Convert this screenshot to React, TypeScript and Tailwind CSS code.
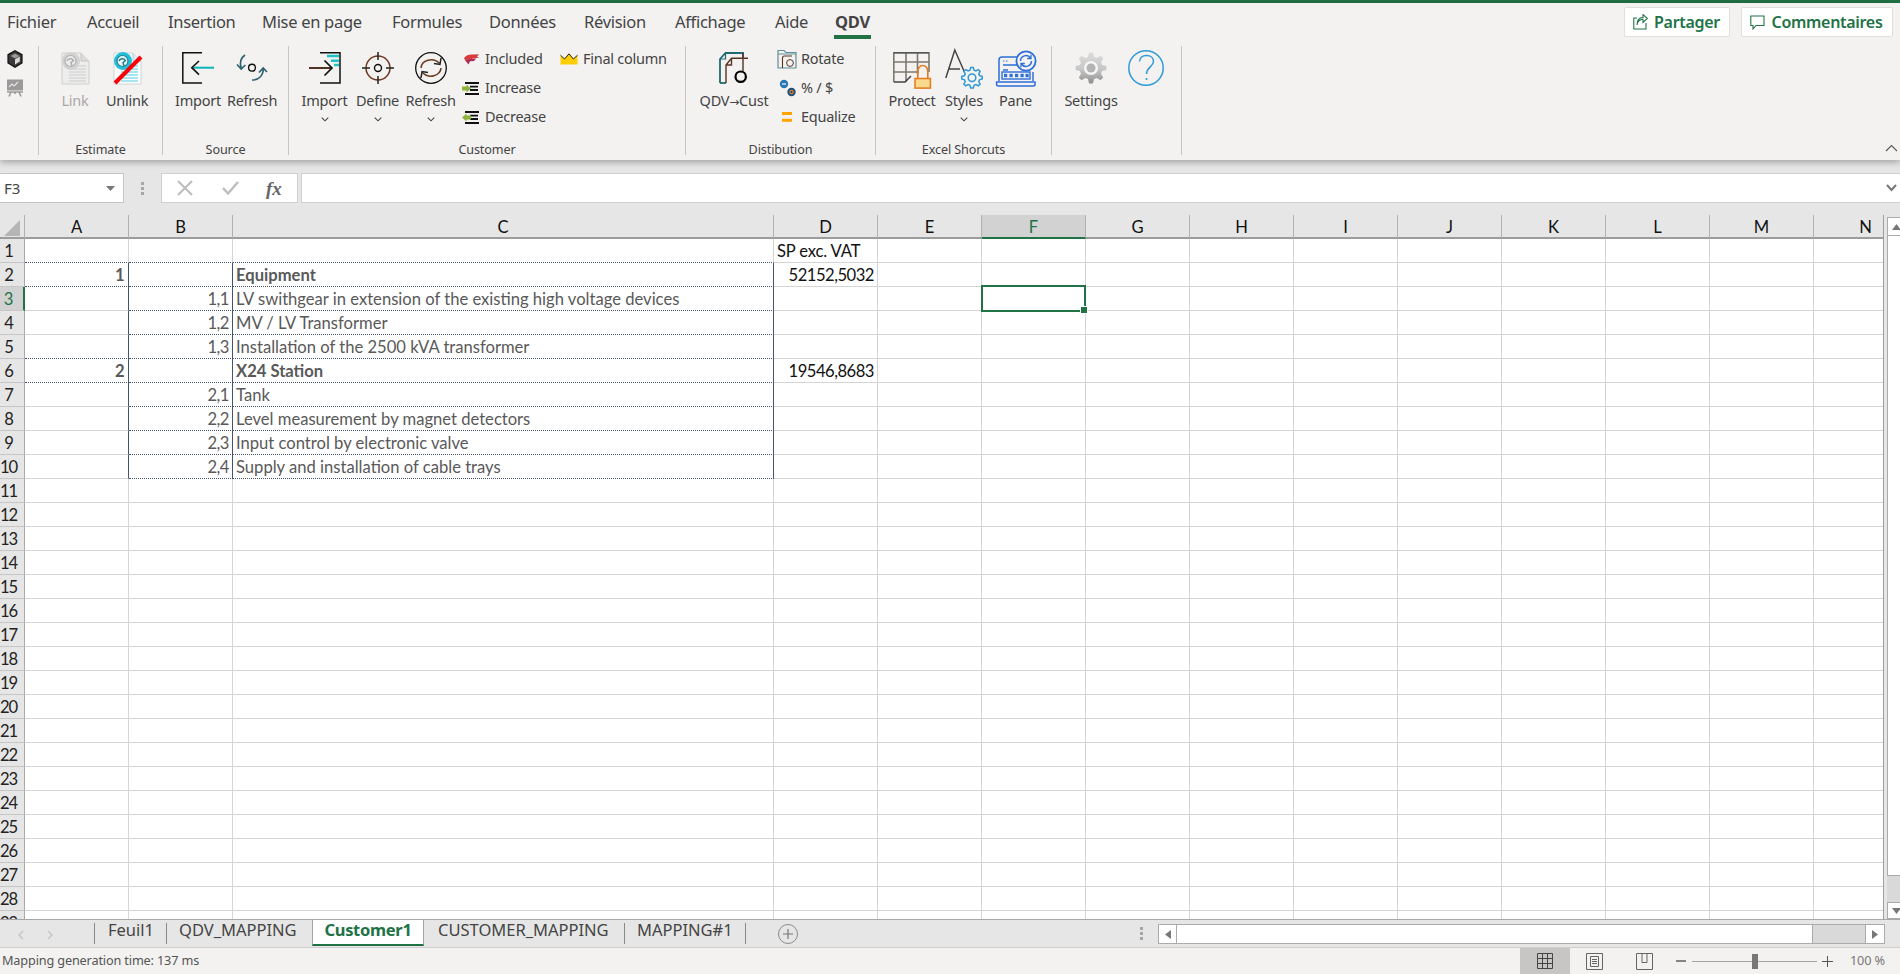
import React from "react";

function gear(cx: number, cy: number, ro: number, ri: number, n: number) {
  const pts: string[] = [];
  for (let i = 0; i < n; i++) {
    const a = (i / n) * Math.PI * 2;
    const s = (Math.PI * 2) / n;
    const add = (r: number, t: number) => pts.push(`${(cx + r * Math.cos(t)).toFixed(2)},${(cy + r * Math.sin(t)).toFixed(2)}`);
    add(ri, a - s * 0.34);
    add(ro, a - s * 0.16);
    add(ro, a + s * 0.16);
    add(ri, a + s * 0.34);
  }
  return pts.join(" ");
}

const Hex = () => (
  <svg width="16" height="18" viewBox="0 0 16 18">
    <path d="M8 .8 15 4.6V13L8 17.2 1 13V4.6Z" fill="#3a3a3a" stroke="#111" strokeWidth="1.2" />
    <path d="M8 3.4 12.6 6 8 8.6 3.6 6Z" fill="#9a9a9a" />
    <path d="M8 9.2 12.8 6.6V11.6L8 14.6Z" fill="#d9d9d9" />
  </svg>
);
const Board = () => (
  <svg width="18" height="18" viewBox="0 0 18 18">
    <rect x="1" y="0.5" width="16" height="11" fill="#9a9a9a" />
    <path d="M3 8 6 5 8 7 12 3" stroke="#e6e6e6" strokeWidth="1.1" fill="none" />
    <path d="M1 13H17M5 13 3 17.5M13 13 15 17.5M9 13V15" stroke="#9a9a9a" strokeWidth="1.6" fill="none" />
  </svg>
);
const DocIcon = ({ off }: { off?: boolean }) => (
  <svg width="30" height="36" viewBox="0 0 30 36" className="overflow-visible">
    <path d="M2 1H21L29 9V32H2Z" fill={off ? "#ededed" : "#ffffff"} stroke={off ? "#cfcfcf" : "#c9d6da"} />
    <path d="M21 1V9H29" fill={off ? "#dcdcdc" : "#d6eef5"} stroke={off ? "#c4c4c4" : "#a9cfd8"} />
    {[14, 17, 20, 23, 26, 29].map((y) => (
      <path key={y} d={`M9 ${y}H26`} stroke={off ? "#d6d6d6" : "#7fdcec"} strokeWidth="1.4" />
    ))}
    <circle cx="11" cy="9" r="9" fill={off ? "#d2d2d2" : "#22c0d8"} />
    <circle cx="10.5" cy="9" r="5.5" fill={off ? "#ececec" : "#e4f7fb"} stroke={off ? "#b0b0b0" : "#2a7f92"} strokeWidth="1.2" />
    <path d="M7 9C8 6 12 6 13.5 8.5L11 10.5 12 14" fill="none" stroke={off ? "#aaa" : "#257489"} strokeWidth="1.4" />
    {!off && <path d="M3 31 29 5" stroke="#fb0007" strokeWidth="4" />}
  </svg>
);
const SourceImport = () => (
  <svg width="32" height="36" viewBox="0 0 32 36" fill="none">
    <path d="M20 .7H.8V31H20" stroke="#111" strokeWidth="1.5" />
    <path d="M10 15.7H32" stroke="#0ab5b9" strokeWidth="2" />
    <path d="M17 9 9.8 15.7 17 22.6" stroke="#111" strokeWidth="1.6" />
  </svg>
);
const SourceRefresh = () => (
  <svg width="32" height="36" viewBox="0 0 32 36" fill="none" stroke="#2f6271" strokeWidth="1.7">
    <circle cx="16" cy="15.7" r="3.4" stroke="#111" strokeWidth="1.4" />
    <path d="M9 3C4.5 6 3.6 11 5.2 16.5" />
    <path d="M1 12.5 5.2 17 9.4 13" />
    <path d="M16 28C23 28 27 23.5 27.3 17" />
    <path d="M23 20.5 27.2 16 31 20" />
  </svg>
);
const CustImport = () => (
  <svg width="32" height="36" viewBox="0 0 32 36" fill="none">
    <path d="M11 .8H31V31H11" stroke="#111" strokeWidth="1.5" />
    <path d="M18 4H30M22 8.7H30M25 13H30" stroke="#1fc1c7" strokeWidth="2.4" />
    <path d="M0 16H22" stroke="#4f3426" strokeWidth="2" />
    <path d="M15.5 8.5 23 16 15.5 23.5" stroke="#111" strokeWidth="1.7" />
  </svg>
);
const Define = () => (
  <svg width="32" height="36" viewBox="0 0 32 36" fill="none">
    <circle cx="16" cy="16" r="12" stroke="#6b3b24" strokeWidth="1.5" />
    <circle cx="16" cy="16" r="3.5" stroke="#111" strokeWidth="1.4" />
    <path d="M16 0V8M16 24V32M0 16H8M24 16H32" stroke="#222" strokeWidth="1.5" />
  </svg>
);
const CustRefresh = () => (
  <svg width="32" height="36" viewBox="0 0 32 36" fill="none">
    <circle cx="16" cy="16" r="15.3" stroke="#111" strokeWidth="1.3" />
    <path d="M6 16C6.5 8.5 18 4.5 24.5 11.5" stroke="#6b3b24" strokeWidth="1.6" />
    <path d="M26 6 25 12.4 19 11.5" stroke="#222" strokeWidth="1.5" />
    <path d="M26 16C25.5 23.5 14 27.5 7.5 20.5" stroke="#6b3b24" strokeWidth="1.6" />
    <path d="M6 26 7 19.6 13 20.5" stroke="#222" strokeWidth="1.5" />
  </svg>
);
const QdvCust = () => (
  <svg width="30" height="36" viewBox="0 0 30 36" fill="none">
    <path d="M1 31V7L6.5 1H24V6.3" stroke="#1f6a6f" strokeWidth="1.8" />
    <path d="M1 7H6.5V1" stroke="#1f6a6f" strokeWidth="1.2" />
    <path d="M1 31H7" stroke="#1f6a6f" strokeWidth="1.8" />
    <path d="M7 31V13L12.5 6.3H29M24 1V19M7 13H12.5V6.3" stroke="#5a3323" strokeWidth="1.4" />
    <circle cx="21.7" cy="24.7" r="5.2" stroke="#000" strokeWidth="2.2" fill="#f3f2f1" />
  </svg>
);
const Protect = () => (
  <svg width="38" height="36" viewBox="0 0 38 36" fill="none" className="overflow-visible">
    <path d="M.8.8H36V10H.8ZM.8 10V30M.8 10H36V20M.8 20H26M13 .8V30M24.5.8V22" stroke="#7d776c" strokeWidth="1.6" />
    <path d="M.8.8H36" stroke="#555" strokeWidth="1.6" />
    <path d="M.8 30H12L18 24" stroke="#444" strokeWidth="1.5" />
    <path d="M24.8 26V19.5A5 6 0 0 1 34.8 19.5V26" stroke="#e57a1a" strokeWidth="1.6" />
    <rect x="22" y="26.5" width="15.4" height="9.6" fill="#f8d98e" stroke="#e57a1a" strokeWidth="1.5" />
  </svg>
);
const Styles = () => (
  <svg width="38" height="36" viewBox="0 0 38 36" fill="none" className="overflow-visible">
    <path d="M.8 26 9.8-2 19 19M3.8 17H15" stroke="#444" strokeWidth="1.5" />
    <polygon points={gear(27, 25.7, 10.3, 7.8, 8)} fill="#f3f2f1" stroke="#2f9ad6" strokeWidth="1.5" />
    <circle cx="27" cy="25.7" r="3.8" stroke="#2f9ad6" strokeWidth="1.5" />
  </svg>
);
const Pane = () => (
  <svg width="40" height="36" viewBox="0 0 40 36" fill="none" className="overflow-visible" stroke="#2e6fd8">
    <path d="M3 29V8Q3 5 6 5H22" strokeWidth="1.5" />
    <path d="M37 20V29" strokeWidth="1.5" />
    <path d="M.6 30H39V32.5Q39 34 37 34H3Q.6 34 .6 32.5Z" strokeWidth="1.5" />
    <path d="M7 13H22M7 18H12" strokeWidth="1.5" />
    <path d="M7 9H13" strokeWidth="1.2" strokeDasharray="1.5 1.5" />
    <rect x="6" y="20" width="28" height="7" strokeWidth="1.4" />
    {[8, 13.5, 19, 24.5, 29.5].map((x) => (
      <rect key={x} x={x} y="21.8" width="3.2" height="3.4" fill="#2e6fd8" stroke="none" />
    ))}
    <circle cx="30" cy="9" r="9.6" fill="#f3f2f1" strokeWidth="1.8" />
    <path d="M24.5 9A5.5 5.5 0 0 1 34.5 6M35.5 9A5.5 5.5 0 0 1 25.5 12" strokeWidth="1.5" />
    <path d="M35 2.8V6.5H31.2M25 15.2V11.5H28.8" strokeWidth="1.3" />
  </svg>
);
const Gear = () => (
  <svg width="32" height="36" viewBox="0 0 32 36" className="overflow-visible">
    <defs>
      <linearGradient id="gg" x1="0" y1="0" x2="0" y2="1">
        <stop offset="0" stopColor="#dcdcdc" />
        <stop offset="0.55" stopColor="#c6c6c6" />
        <stop offset="1" stopColor="#8f8f8f" />
      </linearGradient>
    </defs>
    <polygon points={gear(16, 16, 15.5, 11.5, 8)} fill="url(#gg)" />
    <circle cx="16" cy="16" r="7" fill="#f6f6f6" />
    <circle cx="16" cy="16" r="4.5" fill="#b4b4b4" />
  </svg>
);
const Help = () => (
  <svg width="36" height="36" viewBox="0 0 36 36" fill="none" className="overflow-visible">
    <circle cx="18" cy="16" r="17.2" stroke="#2e9bd6" strokeWidth="1.5" />
    <path d="M11.5 9.5C12 5 15 3.5 18.5 3.5 23 3.5 25.5 6.2 25.5 9.5 25.5 14.5 18.5 15 18.5 22" stroke="#2e9bd6" strokeWidth="1.5" />
    <circle cx="18.5" cy="27" r="1.1" fill="#2e9bd6" />
  </svg>
);
const Included = () => (
  <svg width="16" height="11" viewBox="0 0 16 11">
    <path d="M0 4C2 1 6 0 9 .5L15 .3 13 2.5 15 3.8 9 4.4 6 5.5 1 6Z" fill="#d83b3b" />
    <path d="M1 6 6 5 12 4.6 10 7 6 7.2 4.5 10.5 2.5 8Z" fill="#b02a50" />
  </svg>
);
const Indent = ({ inc }: { inc?: boolean }) => (
  <svg width="17" height="13" viewBox="0 0 17 13" fill="none" className="-ml-[2px]">
    <path d="M3 1H17M8 4.7H16M8 8H16M3 12H17" stroke="#111" strokeWidth="1.8" />
    {inc ? (
      <path d="M0 4.6H4.5V2.5L9 6.5 4.5 10.5V8.4H0Z" fill="#8db33f" />
    ) : (
      <path d="M9 4.6H4.5V2.5L0 6.5 4.5 10.5V8.4H9Z" fill="#8db33f" />
    )}
  </svg>
);
const Crown = () => (
  <svg width="18" height="12" viewBox="0 0 18 12">
    <path d="M.5 2.2 4.6 6 9 .8 13.4 6 17.5 2.2V11.5H.5Z" fill="#ffcd00" />
    <path d="M.5 2.2 4.6 6 9 .8 13.4 6 17.5 2.2" fill="none" stroke="#222" strokeWidth="1" />
  </svg>
);
const Rotate = () => (
  <svg width="20" height="20" viewBox="0 0 20 20" fill="none">
    <path d="M1 19V1.5H7L9 3.5H19V19Z" stroke="#5f8f98" strokeWidth="1.2" />
    <path d="M1 5H19" stroke="#5f8f98" strokeWidth="1" />
    <path d="M5.5 19V9Q5.5 7 7.5 7H15" stroke="#5a3323" strokeWidth="1.1" />
    <circle cx="13" cy="14" r="3.4" stroke="#5a3323" strokeWidth="1" />
  </svg>
);
const Percent = () => (
  <svg width="17" height="18" viewBox="0 0 17 18">
    <circle cx="5" cy="5" r="4.2" fill="#2a76b5" />
    <path d="M3 5H7" stroke="#dfe9f2" strokeWidth="1.4" />
    <circle cx="12.5" cy="13" r="4.2" fill="#1f4e79" />
    <circle cx="12.5" cy="13" r="1.7" fill="none" stroke="#e8852a" strokeWidth="1.1" />
  </svg>
);
const Equalize = () => (
  <svg width="10" height="10" viewBox="0 0 10 10">
    <rect width="10" height="3" fill="#ffa500" />
    <rect y="6.8" width="10" height="3" fill="#ffa500" />
  </svg>
);
const Chev = () => (
  <svg width="8" height="5" viewBox="0 0 8 5" fill="none">
    <path d="M.7.7 4 3.8 7.3.7" stroke="#444" strokeWidth="1.1" />
  </svg>
);

function Big({ w, label, icon, chev, off }: { w: string; label: React.ReactNode; icon: React.ReactNode; chev?: boolean; off?: boolean }) {
  return (
    <div className={`flex flex-col items-center ${w}`}>
      <div className="h-[36px] flex justify-center">{icon}</div>
      <div className={`mt-[2px] h-[20px] leading-[20px] text-[14.5px] tracking-[-0.25px] whitespace-nowrap ${off ? "text-[#a8a8a8]" : "text-[#444]"}`}>{label}</div>
      {chev && (
        <div className="h-[16px] mt-[1px] flex items-center">
          <Chev />
        </div>
      )}
    </div>
  );
}
function Small({ icon, label, iw }: { icon: React.ReactNode; label: string; iw: string }) {
  return (
    <div className="h-[29px] flex items-center whitespace-nowrap text-[14.5px] tracking-[-0.25px] text-[#444]">
      <div className={`${iw} flex justify-start`}>{icon}</div>
      <span>{label}</span>
    </div>
  );
}
function Group({ w, label, children, pl }: { w: string; label?: string; children?: React.ReactNode; pl: string }) {
  return (
    <div className={`${w} h-[109px] border-r border-[#c8c6c4] flex flex-col shrink-0`}>
      <div className={`h-[95px] shrink-0 flex items-start ${pl}`}>{children}</div>
      <div className="h-[18px] shrink-0 text-center text-[12.6px] leading-[18px] tracking-[-0.1px] text-[#444] whitespace-nowrap">{label}</div>
    </div>
  );
}

const tabs: [string, string][] = [
  ["Fichier", "w-[80px]"],
  ["Accueil", "w-[81px]"],
  ["Insertion", "w-[94px]"],
  ["Mise en page", "w-[130px]"],
  ["Formules", "w-[97px]"],
  ["Données", "w-[95px]"],
  ["Révision", "w-[91px]"],
  ["Affichage", "w-[100px]"],
  ["Aide", "w-[60px]"],
];

type RowDef = { a?: string; b?: string; c?: string; d?: string; bold?: boolean; head?: boolean; aDot?: boolean };
const rowData: Record<number, RowDef> = {
  1: { d: "SP exc. VAT", head: true, aDot: true },
  2: { a: "1", c: "Equipment", d: "52152,5032", bold: true, aDot: true },
  3: { b: "1,1", c: "LV swithgear in extension of the existing high voltage devices" },
  4: { b: "1,2", c: "MV / LV Transformer" },
  5: { b: "1,3", c: "Installation of the 2500 kVA transformer", aDot: true },
  6: { a: "2", c: "X24 Station", d: "19546,8683", bold: true, aDot: true },
  7: { b: "2,1", c: "Tank" },
  8: { b: "2,2", c: "Level measurement by magnet detectors" },
  9: { b: "2,3", c: "Input control by electronic valve" },
  10: { b: "2,4", c: "Supply and installation of cable trays" },
};

const COLS = ["A", "B", "C", "D", "E", "F", "G", "H", "I", "J", "K", "L", "M", "N"];
const plain = "border-b border-r border-[#d4d4d4]";

function Row({ n }: { n: number }) {
  const r = rowData[n];
  const inT = n >= 1 && n <= 10;
  const body = n >= 2 && n <= 10;
  const vr = body ? "border-r-[#44546a]" : "border-r-[#d4d4d4]";
  const dot = { borderBottomStyle: "dotted" } as const;
  return (
    <>
      <div className={`flex items-center justify-center pt-[1px] pr-[7px] tracking-[-1.1px] border-b border-[#c6c6c6] ${n === 3 ? "bg-[#d2d2d2] border-r-2 border-r-[#217346] text-[#217346]" : "bg-[#e6e6e6] border-r border-r-[#a8a8a8] text-[#222]"}`}>
        {n}
      </div>
      <div className={`border-r border-b ${vr} flex items-center justify-end pt-[1px] pr-[4px] font-bold tracking-[-0.5px] text-[#595959] ${r?.aDot ? "border-b-[#44546a]" : "border-b-[#d4d4d4]"}`} style={r?.aDot ? dot : undefined}>
        {r?.a}
      </div>
      <div className={`border-r border-b ${vr} flex items-center justify-end pt-[1px] pr-[3px] tracking-[-0.5px] text-[#595959] ${inT ? "border-b-[#44546a]" : "border-b-[#d4d4d4]"}`} style={inT ? dot : undefined}>
        {r?.b}
      </div>
      <div className={`border-r border-b ${vr} flex items-center pt-[1px] pl-[3px] whitespace-nowrap text-[#595959] ${r?.bold ? "font-bold" : ""} ${inT ? "border-b-[#44546a]" : "border-b-[#d4d4d4]"}`} style={inT ? dot : undefined}>
        {r?.c}
      </div>
      <div className={`${plain} flex items-center pt-[1px] text-[#111] whitespace-nowrap ${r?.head ? "justify-start pl-[3px] tracking-[-0.15px]" : "justify-end pr-[3px] tracking-[-0.5px]"}`}>{r?.d}</div>
      <div className={plain} />
      <div className={`${plain} relative`}>
        {n === 3 && (
          <div className="absolute -left-[1px] -right-[1px] -top-[2px] -bottom-[2px] border-2 border-[#217346] z-10">
            <div className="absolute -right-[4px] -bottom-[4px] w-[8px] h-[8px] bg-[#217346] border border-white" />
          </div>
        )}
      </div>
      {["G", "H", "I", "J", "K", "L", "M", "N"].map((c) => (
        <div key={c} className={plain} />
      ))}
    </>
  );
}

export default function App() {
  return (
    <div className="w-[1900px] h-[974px] overflow-hidden flex flex-col bg-white font-['Noto_Sans','Open_Sans',sans-serif] text-[#444]">
      <div className="h-[3px] bg-[#217346] shrink-0" />

      <div className="relative z-10 bg-[#f3f2f1] shrink-0 h-[157px] shadow-[0_2px_7px_rgba(0,0,0,0.32)]">
        <div className="h-[36px] flex items-start pl-[7px] relative">
          {tabs.map(([t, w]) => (
            <div key={t} className={`${w} h-[36px] leading-[38px] text-[16.5px] tracking-[-0.3px] text-[#444] whitespace-nowrap`}>
              {t}
            </div>
          ))}
          <div className="w-[37px] h-[36px] -ml-[1px] border-b-[4px] border-[#217346] leading-[38px] text-[16.5px] tracking-[-0.3px] font-bold text-[#444] flex justify-center whitespace-nowrap">QDV</div>
          <div className="ml-auto flex gap-[11px] pt-[4px] pr-[7.5px]">
            <div className="w-[106px] h-[30px] bg-white border border-[#e1dfdd] rounded-[2px] flex items-center justify-center gap-[6px] text-[16px] tracking-[-0.3px] font-semibold text-[#217346]">
              <svg width="15" height="16" viewBox="0 0 15 16" fill="none" stroke="#217346" strokeWidth="1.1">
                <path d="M4 4H.8V15H13V9" />
                <path d="M4 11C4.5 7.5 6.5 5.5 10 5.3V8.5L14.3 4.3 10 .6V3.4C6 3.6 4 6.5 4 11Z" />
              </svg>
              <span>Partager</span>
            </div>
            <div className="w-[152px] h-[30px] bg-white border border-[#e1dfdd] rounded-[2px] flex items-center justify-center gap-[6px] text-[16px] tracking-[-0.3px] font-semibold text-[#217346]">
              <svg width="15" height="15" viewBox="0 0 15 15" fill="none" stroke="#217346" strokeWidth="1.1">
                <path d="M.8 1H14V10.5H6L3 14V10.5H.8Z" />
              </svg>
              <span>Commentaires</span>
            </div>
          </div>
        </div>

        <div className="flex items-start pt-[7px] relative">
          <div className="w-[39px] h-[109px] border-r border-[#c8c6c4] shrink-0 flex flex-col items-center pr-[9px]">
            <div className="h-[29px] -mt-[2px] flex items-center">
              <Hex />
            </div>
            <div className="h-[29px] flex items-center">
              <Board />
            </div>
          </div>
          <Group w="w-[124px]" label="Estimate" pl="pt-[6px] pl-[10px]">
            <Big w="w-[52px]" label="Link" off icon={<DocIcon off />} />
            <Big w="w-[52px]" label="Unlink" icon={<DocIcon />} />
          </Group>
          <Group w="w-[126px]" label="Source" pl="pt-[6px] pl-[8px]">
            <Big w="w-[54px]" label="Import" icon={<SourceImport />} />
            <Big w="w-[54px]" label="Refresh" icon={<SourceRefresh />} />
          </Group>
          <Group w="w-[397px]" label="Customer" pl="pt-[6px] pl-[9px]">
            <Big w="w-[53px]" label="Import" chev icon={<CustImport />} />
            <Big w="w-[53px]" label="Define" chev icon={<Define />} />
            <Big w="w-[53px]" label="Refresh" chev icon={<CustRefresh />} />
            <div className="flex flex-col w-[103px] ml-[7px] -mt-[7.5px]">
              <Small iw="w-[21px]" icon={<Included />} label="Included" />
              <Small iw="w-[21px]" icon={<Indent inc />} label="Increase" />
              <Small iw="w-[21px]" icon={<Indent />} label="Decrease" />
            </div>
            <div className="-mt-[7.5px] -ml-[7px]">
              <Small iw="w-[23px]" icon={<Crown />} label="Final column" />
            </div>
          </Group>
          <Group w="w-[190px]" label="Distibution" pl="pt-[6px] pl-[4px]">
            <Big w="w-[88px]" label={<>QDV<span className="font-['DejaVu_Sans',sans-serif] text-[12px]">→</span>Cust</>} icon={<QdvCust />} />
            <div className="flex flex-col -mt-[7.5px] -ml-[1px]">
              <Small iw="w-[24px]" icon={<Rotate />} label="Rotate" />
              <Small iw="w-[24px]" icon={<span className="ml-[2px] block"><Percent /></span>} label="% / $" />
              <Small iw="w-[24px]" icon={<span className="ml-[5px] block"><Equalize /></span>} label="Equalize" />
            </div>
          </Group>
          <Group w="w-[176px]" label="Excel Shorcuts" pl="pt-[6px] pl-[10px]">
            <Big w="w-[52px]" label="Protect" icon={<Protect />} />
            <Big w="w-[52px]" label="Styles" chev icon={<Styles />} />
            <Big w="w-[51px]" label="Pane" icon={<Pane />} />
          </Group>
          <Group w="w-[130px]" pl="pt-[6px] pl-[11px]">
            <Big w="w-[56px]" label="Settings" icon={<Gear />} />
            <Big w="w-[54px]" label="" icon={<Help />} />
          </Group>
          <svg width="13" height="8" viewBox="0 0 13 8" fill="none" className="absolute right-[2px] bottom-[3px]">
            <path d="M1 7 6.5 1.5 12 7" stroke="#555" strokeWidth="1.1" />
          </svg>
        </div>
      </div>

      <div className="h-[55px] shrink-0 bg-[#e6e6e6] pt-[13px] flex items-start">
        <div className="w-[124px] h-[30px] bg-white border border-[#c6c6c6] border-l-0 flex items-center justify-between pl-[4px] pr-[8px] text-[15px] text-[#444]">
          <span>F3</span>
          <svg width="9" height="5" viewBox="0 0 9 5"><path d="M0 0H9L4.5 5Z" fill="#777" /></svg>
        </div>
        <div className="w-[37px] h-[30px] flex flex-col items-center justify-center gap-[2px]">
          <i className="block w-[3px] h-[3px] bg-[#a6a6a6]" />
          <i className="block w-[3px] h-[3px] bg-[#a6a6a6]" />
          <i className="block w-[3px] h-[3px] bg-[#a6a6a6]" />
        </div>
        <div className="w-[137px] h-[30px] bg-white border border-[#d0d0d0] flex items-center pl-[15px]">
          <svg width="16" height="16" viewBox="0 0 16 16"><path d="M1 1 15 15M15 1 1 15" stroke="#bdbdbd" strokeWidth="2" /></svg>
          <svg width="17" height="14" viewBox="0 0 17 14" className="ml-[29px]"><path d="M1 7 6 12.5 16 1" fill="none" stroke="#bdbdbd" strokeWidth="2.4" /></svg>
          <span className="ml-[27px] font-['Liberation_Serif',serif] italic font-bold text-[19px] leading-none text-[#666]">fx</span>
        </div>
        <div className="w-[3px]" />
        <div className="flex-1 h-[30px] bg-white border border-[#d0d0d0] border-r-0 flex items-center justify-end pr-[3px]">
          <svg width="11" height="8" viewBox="0 0 11 8" fill="none"><path d="M1 1 5.5 6 10 1" stroke="#777" strokeWidth="2" /></svg>
        </div>
      </div>

      <div className="flex h-[704px] shrink-0 bg-[#e6e6e6]">
        <div className="w-[1884px] h-[704px] overflow-hidden border-r border-[#9f9f9f] shrink-0 bg-white">
          <div className="grid grid-cols-[25px_104px_104px_541px_repeat(11,104px)] auto-rows-[24px] font-['Lato',sans-serif] text-[16.6px] text-[#222]">
            <div className="bg-[#e6e6e6] border-b-2 border-[#9c9c9c] border-r border-r-[#b1b1b1] relative">
              <svg width="16" height="16" viewBox="0 0 16 16" className="absolute left-[4px] top-[5px]"><path d="M16 0V16H0Z" fill="#b5b5b5" /></svg>
            </div>
            {COLS.map((c) => (
              <div key={c} className={`flex items-center justify-center pt-[2px] border-b-2 border-r ${c === "F" ? "bg-[#d2d2d2] border-b-[#217346] border-r-[#b1b1b1] text-[#217346]" : "bg-[#e6e6e6] border-b-[#9c9c9c] border-r-[#b1b1b1] text-[#111]"}`}>
                {c}
              </div>
            ))}
            {Array.from({ length: 29 }, (_, i) => (
              <Row key={i} n={i + 1} />
            ))}
          </div>
        </div>
        <div className="flex-1 flex flex-col bg-[#e6e6e6] pt-[2px] pl-[3px] overflow-hidden">
          <div className="h-[19px] w-[16px] bg-white border border-[#ababab] flex items-center justify-center pl-[3px]">
            <svg width="9" height="6" viewBox="0 0 9 6"><path d="M4.5 0 9 6H0Z" fill="#777" /></svg>
          </div>
          <div className="h-[640px] w-[16px] bg-white border-x border-b border-[#ababab]" />
          <div className="h-[26px] bg-[#d9d9d9]" />
          <div className="h-[17px] w-[16px] bg-white border border-[#ababab] flex items-center justify-center pl-[3px]">
            <svg width="9" height="6" viewBox="0 0 9 6"><path d="M4.5 6 9 0H0Z" fill="#777" /></svg>
          </div>
        </div>
      </div>

      <div className="h-[29px] shrink-0 bg-[#e6e6e6] border-t border-[#a6a6a6] border-b border-b-[#cfcfcf] flex items-start text-[16.5px] text-[#444]">
        <div className="w-[94px] h-[25px] flex items-center pl-[18px] gap-[23px] mt-[2px]">
          <svg width="6" height="10" viewBox="0 0 6 10" fill="none"><path d="M5 1 1 5 5 9" stroke="#c4c4c4" strokeWidth="1.4" /></svg>
          <svg width="6" height="10" viewBox="0 0 6 10" fill="none"><path d="M1 1 5 5 1 9" stroke="#c4c4c4" strokeWidth="1.4" /></svg>
        </div>
        <div className="w-[73px] h-[21px] mt-[3px] border-l border-r border-[#8a8a8a] pl-[13px] leading-[14px] whitespace-nowrap">Feuil1</div>
        <div className="w-[145px] h-[21px] mt-[3px] pl-[12px] leading-[14px] whitespace-nowrap">QDV_MAPPING</div>
        <div className="w-[112px] h-[26px] bg-white border-x border-[#a6a6a6] border-b-2 border-b-[#217346] flex justify-center font-bold tracking-[-0.3px] text-[#217346] leading-[20px] whitespace-nowrap">Customer1</div>
        <div className="w-[201px] h-[21px] mt-[3px] border-r border-[#8a8a8a] pl-[14px] leading-[14px] whitespace-nowrap">CUSTOMER_MAPPING</div>
        <div className="w-[121px] h-[21px] mt-[3px] border-r border-[#8a8a8a] pl-[12px] leading-[14px] whitespace-nowrap">MAPPING#1</div>
        <div className="ml-[32px] mt-[4px] w-[20px] h-[20px] rounded-full border border-[#8a8a8a] flex items-center justify-center text-[#777]">
          <svg width="10" height="10" viewBox="0 0 10 10"><path d="M5 0V10M0 5H10" stroke="#777" strokeWidth="1.2" /></svg>
        </div>
        <div className="ml-[342px] mt-[7px] flex flex-col gap-[2px] w-[3px]">
          <i className="block w-[3px] h-[3px] bg-[#a6a6a6]" />
          <i className="block w-[3px] h-[3px] bg-[#a6a6a6]" />
          <i className="block w-[3px] h-[3px] bg-[#a6a6a6]" />
        </div>
        <div className="ml-[15px] mt-[4px] w-[727px] h-[20px] flex border border-[#ababab] bg-[#d9d9d9]">
          <div className="w-[18px] bg-white border-r border-[#ababab] flex items-center justify-center">
            <svg width="6" height="9" viewBox="0 0 6 9"><path d="M0 4.5 6 0V9Z" fill="#777" /></svg>
          </div>
          <div className="w-[636px] bg-white border-r border-[#ababab]" />
          <div className="flex-1" />
          <div className="w-[19px] bg-white border-l border-[#ababab] flex items-center justify-center">
            <svg width="6" height="9" viewBox="0 0 6 9"><path d="M6 4.5 0 0V9Z" fill="#777" /></svg>
          </div>
        </div>
      </div>

      <div className="flex-1 bg-[#f3f2f1] flex items-center text-[12.7px] tracking-[-0.15px] text-[#555]">
        <span className="pl-[2px] whitespace-nowrap">Mapping generation time: 137 ms</span>
        <div className="ml-auto flex items-center h-full">
          <div className="w-[50px] h-full bg-[#c8c6c4] flex items-center justify-center">
            <svg width="16" height="16" viewBox="0 0 16 16" fill="none" stroke="#444" strokeWidth="1"><path d="M.5.5H15.5V15.5H.5ZM5.5.5V15.5M10.5.5V15.5M.5 5.5H15.5M.5 10.5H15.5" /></svg>
          </div>
          <div className="w-[49px] flex justify-center">
            <svg width="17" height="17" viewBox="0 0 17 17" fill="none" stroke="#666"><path d="M.5.5H16.5V16.5H.5Z" /><path d="M4.5 3.5H12.5V13.5H4.5Z" /><path d="M6 6.5H11M6 8.5H11M6 10.5H11" /></svg>
          </div>
          <div className="w-[51px] flex justify-center">
            <svg width="17" height="17" viewBox="0 0 17 17" fill="none" stroke="#666"><path d="M.5.5H16.5V16.5H.5Z" /><path d="M6 .5V9.5H11V.5" /></svg>
          </div>
          <svg width="10" height="2" viewBox="0 0 10 2" className="ml-[6px]"><path d="M0 1H10" stroke="#555" strokeWidth="1.4" /></svg>
          <div className="ml-[6px] relative w-[125px] h-[1px] bg-[#a6a6a6]">
            <div className="absolute left-[60px] -top-[7px] w-[6px] h-[15px] bg-[#777]" />
          </div>
          <svg width="11" height="11" viewBox="0 0 11 11" className="ml-[5px]"><path d="M5.5 0V11M0 5.5H11" stroke="#555" strokeWidth="1" /></svg>
          <span className="ml-[17px] w-[50px] whitespace-nowrap text-[#777]">100 %</span>
        </div>
      </div>
    </div>
  );
}
